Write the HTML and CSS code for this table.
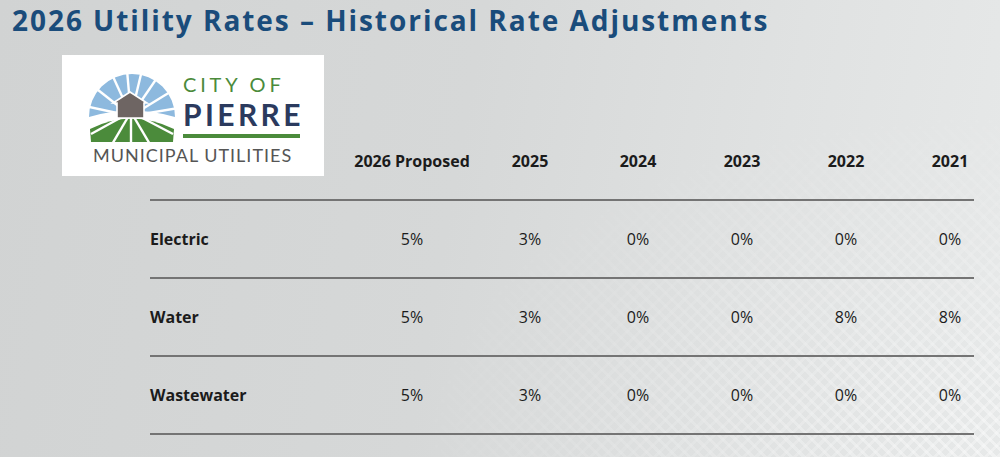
FILE: index.html
```html
<!DOCTYPE html>
<html lang="en">
<head>
<meta charset="utf-8">
<title>2026 Utility Rates</title>
<link rel="stylesheet" href="styles.css">
</head>
<body>
<div class="slide">
  <h1 class="title">2026 Utility Rates – Historical Rate Adjustments</h1>

  <div class="logo">
    <div class="logo-top">
      <svg class="emblem" width="90" height="72" viewBox="0 0 90 72" aria-hidden="true">
        <path d="M2,45 A43,43 0 0 1 88,45 Q44,32 2,45 Z" fill="#8db9de"/>
        <path d="M3,57 Q44,36 87,57 L86,70 L4,70 Z" fill="#4b8b3b"/>
        <g stroke="#fff" stroke-width="2.4" stroke-linecap="butt">
          <line x1="44" y1="44" x2="-2" y2="34"/>
          <line x1="44" y1="44" x2="6" y2="14"/>
          <line x1="44" y1="44" x2="23" y2="-2"/>
          <line x1="44" y1="44" x2="40" y2="-2"/>
          <line x1="44" y1="44" x2="55" y2="-2"/>
          <line x1="44" y1="44" x2="74" y2="0"/>
          <line x1="44" y1="44" x2="88" y2="17"/>
          <line x1="44" y1="44" x2="92" y2="36"/>
          <line x1="44" y1="40" x2="4" y2="62"/>
          <line x1="44" y1="40" x2="24" y2="74"/>
          <line x1="44" y1="40" x2="44" y2="74"/>
          <line x1="44" y1="40" x2="64" y2="74"/>
          <line x1="44" y1="40" x2="86" y2="62"/>
        </g>
        <path d="M43,20 L60,31 L57,31 L57,46 L30,46 L30,31 L26,31 Z" fill="#6e6563" stroke="#fff" stroke-width="1.6" stroke-linejoin="miter"/>
      </svg>
      <div class="wordmark">
        <span class="city">CITY OF</span>
        <span class="pierre">PIERRE</span>
        <span class="rule"></span>
      </div>
    </div>
    <div class="muni">MUNICIPAL UTILITIES</div>
  </div>

  <div class="rates">
    <div class="row head">
      <div class="label"></div>
      <div>2026 Proposed</div>
      <div>2025</div>
      <div>2024</div>
      <div>2023</div>
      <div>2022</div>
      <div>2021</div>
    </div>
    <div class="row">
      <div class="label">Electric</div>
      <div>5%</div><div>3%</div><div>0%</div><div>0%</div><div>0%</div><div>0%</div>
    </div>
    <div class="row">
      <div class="label">Water</div>
      <div>5%</div><div>3%</div><div>0%</div><div>0%</div><div>8%</div><div>8%</div>
    </div>
    <div class="row">
      <div class="label">Wastewater</div>
      <div>5%</div><div>3%</div><div>0%</div><div>0%</div><div>0%</div><div>0%</div>
    </div>
  </div>
</div>
</body>
</html>
```

FILE: styles.css
```css
html, body {
  margin: 0;
  padding: 0;
}

body {
  width: 1000px;
  height: 457px;
  overflow: hidden;
  background: linear-gradient(100deg, #d1d3d3 0%, #d6d8d8 45%, #e0e2e2 75%, #e7e9e9 100%);
  font-family: "Open Sans", "Liberation Sans", sans-serif;
  color: #1b1b1b;
}

.slide {
  position: relative;
  width: 1000px;
  height: 457px;
}

.slide::before {
  content: "";
  position: absolute;
  inset: 0;
  pointer-events: none;
  background:
    repeating-linear-gradient(45deg, rgba(255,255,255,0.5) 0 3px, rgba(255,255,255,0) 3px 9px),
    repeating-linear-gradient(-45deg, rgba(255,255,255,0.4) 0 3px, rgba(255,255,255,0) 3px 9px);
  -webkit-mask-image: radial-gradient(ellipse 60% 80% at 100% 100%, rgba(0,0,0,0.85) 0%, rgba(0,0,0,0.4) 45%, rgba(0,0,0,0) 100%);
  mask-image: radial-gradient(ellipse 60% 80% at 100% 100%, rgba(0,0,0,0.85) 0%, rgba(0,0,0,0.4) 45%, rgba(0,0,0,0) 100%);
}

.title {
  position: relative;
  margin: 0;
  padding: 2px 0 0 12px;
  height: 55px;
  box-sizing: border-box;
  font-size: 28px;
  line-height: 36px;
  font-weight: 700;
  letter-spacing: 1.95px;
  color: #1a4c7b;
  white-space: nowrap;
}

.logo {
  position: relative;
  margin-left: 62px;
  width: 262px;
  height: 121px;
  box-sizing: border-box;
  background: #fff;
  padding: 15px 0 0 25px;
  display: flex;
  flex-direction: column;
  font-family: "Lato", "Open Sans", sans-serif;
}

.logo-top {
  display: flex;
  gap: 6px;
}

.emblem {
  display: block;
  flex: none;
  margin-top: 2px;
}

.wordmark {
  display: flex;
  flex-direction: column;
  margin-top: 4px;
}

.city {
  font-size: 20px;
  line-height: 21px;
  font-weight: 400;
  letter-spacing: 3.8px;
  color: #4b8b3b;
}

.pierre {
  margin-top: 4px;
  font-size: 30px;
  line-height: 30px;
  font-weight: 700;
  letter-spacing: 3.4px;
  color: #2b3a5e;
}

.rule {
  margin-top: 5px;
  width: 117px;
  height: 4px;
  background: #4b8b3b;
}

.muni {
  margin-top: 2px;
  padding-left: 6px;
  font-size: 18px;
  line-height: 18px;
  font-weight: 400;
  letter-spacing: 1px;
  color: #555;
  white-space: nowrap;
}

.rates {
  position: relative;
  margin: -53px 0 0 150px;
  width: 824px;
}

.row {
  display: grid;
  grid-template-columns: 200px 124px 112px 104px 104px 104px 104px;
  align-items: center;
  height: 78px;
  box-sizing: border-box;
  border-bottom: 2px solid #747474;
  font-size: 16px;
  font-weight: 400;
}

.row > div {
  text-align: center;
  white-space: nowrap;
}

.row > .label {
  text-align: left;
  font-weight: 700;
}

.head > div {
  font-weight: 700;
}
```
